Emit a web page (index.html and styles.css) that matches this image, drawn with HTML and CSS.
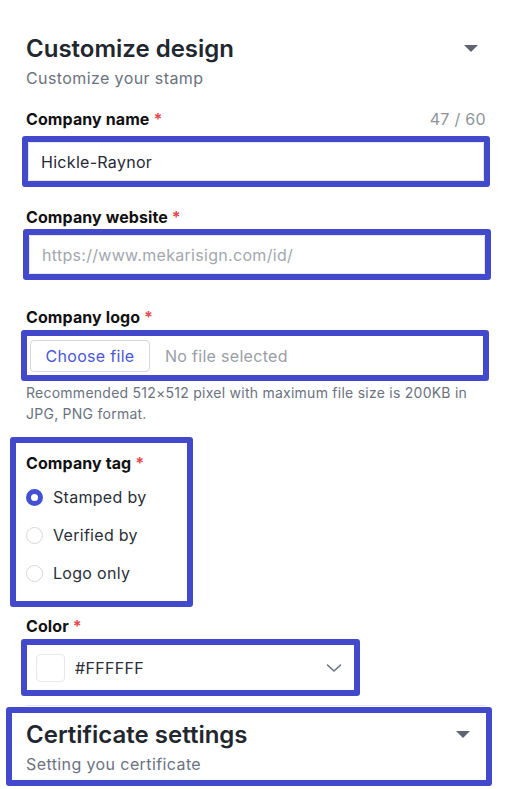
FILE: index.html
```html
<!DOCTYPE html>
<html lang="en">
<head>
    <meta charset="UTF-8">
    <meta name="viewport" content="width=device-width, initial-scale=1.0">
    <title>Customize design</title>
    <link rel="stylesheet" href="styles.css">
</head>
<body>
    <main class="panel">
        <div class="section-head">
            <div>
                <h2 class="section-title">Customize design</h2>
                <p class="section-sub">Customize your stamp</p>
            </div>
            <span class="caret"></span>
        </div>

        <div class="label-row first">
            <label class="field-label">Company name <span class="req">*</span></label>
            <span class="counter">47 / 60</span>
        </div>
        <div class="hl hl-name">
            <input class="text-input" type="text" value="Hickle-Raynor">
        </div>

        <label class="field-label gap-website">Company website <span class="req">*</span></label>
        <div class="hl hl-website">
            <input class="text-input" type="text" placeholder="https://www.mekarisign.com/id/">
        </div>

        <label class="field-label gap-logo">Company logo <span class="req">*</span></label>
        <div class="hl hl-logo">
            <div class="file-input">
                <span class="file-btn">Choose file</span>
                <span class="file-name">No file selected</span>
            </div>
        </div>
        <p class="help">Recommended 512×512 pixel with maximum file size is 200KB in JPG, PNG format.</p>

        <div class="hl hl-tag">
            <label class="field-label">Company tag <span class="req">*</span></label>
            <div class="radio-row">
                <span class="radio checked"></span> Stamped by
            </div>
            <div class="radio-row">
                <span class="radio"></span> Verified by
            </div>
            <div class="radio-row">
                <span class="radio"></span> Logo only
            </div>
        </div>

        <label class="field-label gap-color">Color <span class="req">*</span></label>
        <div class="hl hl-color">
            <div class="color-select">
                <span class="swatch"></span>
                <span class="color-value">#FFFFFF</span>
                <svg class="chevron" width="16" height="10" viewBox="0 0 16 10">
                    <path d="M1.5 2 L8 8 L14.5 2" fill="none" stroke="#6b7280" stroke-width="1.6" stroke-linecap="round" stroke-linejoin="round"/>
                </svg>
            </div>
        </div>

        <hr class="divider">

        <div class="hl hl-cert">
            <div class="section-head">
                <div>
                    <h2 class="section-title">Certificate settings</h2>
                    <p class="section-sub">Setting you certificate</p>
                </div>
                <span class="caret"></span>
            </div>
        </div>
    </main>
</body>
</html>
```

FILE: styles.css
```css
body {
    margin: 0;
    font-family: Inter, "Noto Sans", sans-serif;
    background-color: #ffffff;
    color: #1f2937;
    letter-spacing: 0.3px;
}

.panel {
    padding: 33px 21px 0 26px;
}

/* collapsible section header */
.section-head {
    display: flex;
    justify-content: space-between;
    align-items: flex-start;
}

.section-title {
    margin: 0;
    font-size: 24px;
    line-height: 32px;
    font-weight: 600;
    letter-spacing: 0;
    color: #22262e;
}

.section-sub {
    margin: 1px 0 0;
    font-size: 16px;
    line-height: 24px;
    letter-spacing: 0.4px;
    color: #6b7280;
}

.caret {
    width: 0;
    height: 0;
    margin-top: 12px;
    margin-right: 8px;
    border-left: 7.5px solid transparent;
    border-right: 7.5px solid transparent;
    border-top: 7px solid #5f6570;
}

/* fields */
.label-row {
    display: flex;
    justify-content: space-between;
    align-items: center;
}

.label-row.first {
    margin-top: 17px;
}

.field-label {
    display: block;
    font-size: 16px;
    line-height: 24px;
    font-weight: 700;
    letter-spacing: 0.1px;
    color: #111111;
}

.req {
    color: #e5484d;
}

.counter {
    font-size: 16px;
    line-height: 24px;
    color: #8e939b;
}

.gap-website { margin-top: 18px; }
.gap-logo { margin-top: 25px; }
.gap-color { margin-top: 7px; }

/* highlight frame around a control */
.hl {
    border: 6px solid #4349cb;
    border-radius: 3px;
    background-color: #ffffff;
}

.hl-name {
    margin: 5px -4px 0;
}

.hl-website {
    margin: 0 -5px 0 -3px;
}

.hl-logo {
    margin: 1px -3px 0 -5px;
}

.text-input {
    display: block;
    box-sizing: border-box;
    width: 100%;
    height: 39px;
    margin: 0;
    padding: 0 12px;
    border: 1px solid #e3e5e8;
    border-radius: 2px;
    font-family: inherit;
    font-size: 16px;
    letter-spacing: 0.3px;
    color: #1f2937;
    outline: none;
}

.text-input::placeholder {
    color: #a3a7ae;
}

.file-input {
    display: flex;
    align-items: center;
    height: 39px;
    padding-left: 3px;
}

.file-btn {
    box-sizing: border-box;
    width: 120px;
    height: 32px;
    line-height: 30px;
    text-align: center;
    border: 1px solid #d4d7dc;
    border-radius: 4px;
    font-size: 16px;
    color: #4a56d8;
}

.file-name {
    margin-left: 15px;
    font-size: 16px;
    color: #9a9ea6;
}

.help {
    margin: 1px 0 0;
    font-size: 14px;
    line-height: 21px;
    letter-spacing: 0.25px;
    color: #6b7280;
}

/* radio group */
.hl-tag {
    box-sizing: content-box;
    width: 161px;
    margin: 13px 0 0 -16px;
    padding: 8px 0 9px 10px;
}

.radio-row {
    display: flex;
    align-items: center;
    height: 38px;
    font-size: 16px;
    color: #2a2f38;
}

.radio-row:first-of-type {
    margin-top: 3px;
}

.radio {
    box-sizing: border-box;
    width: 17px;
    height: 17px;
    margin-right: 10px;
    border: 1px solid #d4d7dc;
    border-radius: 50%;
}

.radio.checked {
    border: 5px solid #4450d4;
}

/* color picker */
.hl-color {
    width: 327px;
    margin: 1px 0 0 -5px;
}

.color-select {
    display: flex;
    align-items: center;
    height: 45px;
    padding: 0 12px 0 9px;
}

.swatch {
    box-sizing: border-box;
    width: 29px;
    height: 28px;
    border: 1px solid #e5e7eb;
    border-radius: 4px;
    background-color: #ffffff;
}

.color-value {
    flex: 1;
    margin-left: 10px;
    font-size: 16px;
    color: #2a2f38;
}

.chevron {
    display: block;
}

.divider {
    margin: 9px 0 0;
    border: none;
    border-top: 1px solid #e5e7eb;
}

.hl-cert {
    margin: 1px -6px 0 -20px;
    padding: 6px 8px 4px 14px;
}
```
